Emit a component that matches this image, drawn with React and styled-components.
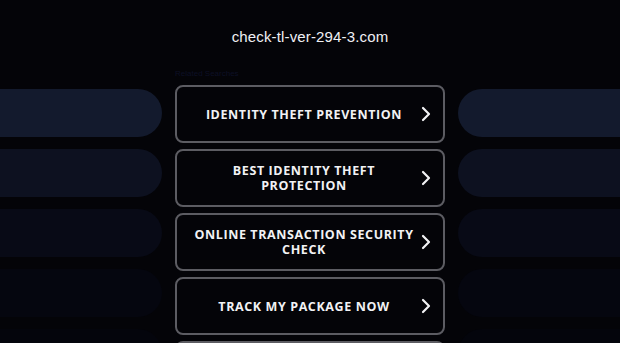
import React from "react";
import styled, { createGlobalStyle } from "styled-components";

const GlobalStyle = createGlobalStyle`
  html, body {
    margin: 0;
    padding: 0;
    background: #040408;
    overflow: hidden;
  }
  body {
    font-family: "Open Sans", sans-serif;
  }
`;

const Page = styled.div`
  width: 620px;
  height: 343px;
  background: #040408;
  overflow: hidden;
`;

const Header = styled.header`
  height: 64px;
  display: flex;
  justify-content: center;
  padding-top: 27px;
  box-sizing: border-box;
`;

const Domain = styled.h1`
  margin: 0;
  color: #f0f0f4;
  font-family: "Liberation Sans", Arial, sans-serif;
  font-size: 15px;
  font-weight: 400;
  letter-spacing: 0.15px;
  line-height: 20px;
`;

const Main = styled.main`
  display: grid;
  grid-template-columns: 162px 270px 162px;
  column-gap: 13px;
`;

const Side = styled.div`
  display: flex;
  flex-direction: column;
  gap: 12px;
  padding-top: 25px;
`;

const Pill = styled.div`
  height: 48px;
  background: ${(p) => p.$color};
  border-radius: ${(p) => (p.$side === "left" ? "0 24px 24px 0" : "24px 0 0 24px")};
`;

const Center = styled.div`
  display: flex;
  flex-direction: column;
`;

const Label = styled.div`
  height: 21px;
  padding-top: 5px;
  box-sizing: border-box;
  font-family: "Liberation Sans", Arial, sans-serif;
  font-size: 8px;
  color: #0d1026;
`;

const List = styled.div`
  display: flex;
  flex-direction: column;
  gap: 6px;
`;

const Item = styled.a`
  position: relative;
  height: 58px;
  box-sizing: border-box;
  border: 2px solid #5c5c62;
  border-radius: 8px;
  display: flex;
  align-items: center;
  justify-content: center;
  padding: 0 26px 0 14px;
  color: #f2f2f4;
  text-decoration: none;
  text-align: center;
  font-family: "Open Sans", sans-serif;
  font-size: 12.5px;
  font-weight: 700;
  letter-spacing: 0.6px;
  line-height: 15px;
  text-transform: uppercase;
`;

const Chevron = styled.svg`
  position: absolute;
  right: 12px;
  top: 50%;
  transform: translateY(-50%);
  width: 10px;
  height: 16px;
`;

const items = [
  "Identity Theft Prevention",
  "Best Identity Theft Protection",
  "Online Transaction Security Check",
  "Track My Package Now",
  "",
];

const pillColors = ["#131a2d", "#0d1120", "#080a16", "#05060f", "#04050c"];

const Arrow = () => (
  <Chevron viewBox="0 0 10 16">
    <path d="M2 2 L8 8 L2 14" fill="none" stroke="#f2f2f4" strokeWidth="2.2" strokeLinecap="round" strokeLinejoin="round" />
  </Chevron>
);

export default function App() {
  return (
    <Page>
      <GlobalStyle />
      <Header>
        <Domain>check-tl-ver-294-3.com</Domain>
      </Header>
      <Main>
        <Side>
          {pillColors.map((c, i) => (
            <Pill key={i} $color={c} $side="left" />
          ))}
        </Side>
        <Center>
          <Label>Related Searches</Label>
          <List>
            {items.map((t, i) => (
              <Item key={i} href="#">
                {t}
                {t && <Arrow />}
              </Item>
            ))}
          </List>
        </Center>
        <Side>
          {pillColors.map((c, i) => (
            <Pill key={i} $color={c} $side="right" />
          ))}
        </Side>
      </Main>
    </Page>
  );
}
